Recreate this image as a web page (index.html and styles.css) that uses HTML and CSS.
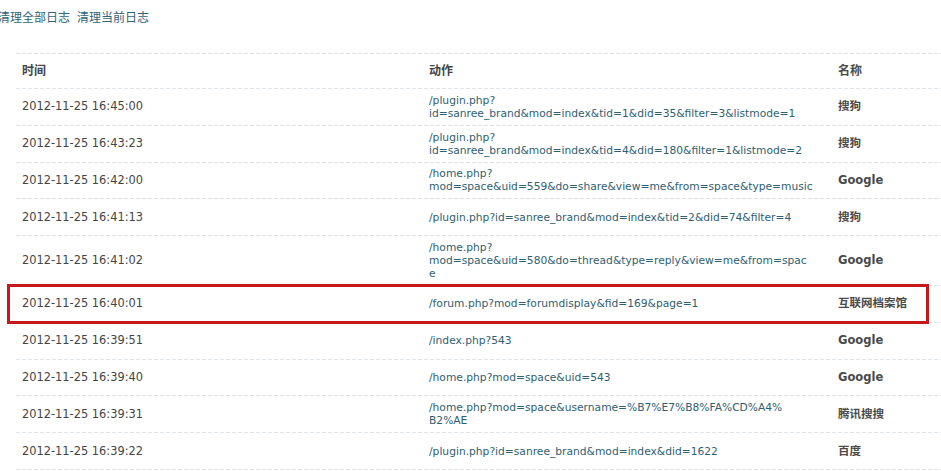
FILE: index.html
```html
<!DOCTYPE html>
<html lang="zh-CN">
<head>
<meta charset="utf-8">
<title>日志</title>
<link rel="stylesheet" href="styles.css">
</head>
<body>
<div class="actions"><a href="#">清理全部日志</a><a href="#">清理当前日志</a></div>
<div class="tb">
  <div class="row head"><div class="c1">时间</div><div class="c2">动作</div><div class="c3">名称</div></div>
  <div class="row"><div class="c1">2012-11-25 16:45:00</div><div class="c2"><a href="#">/plugin.php?<br>id=sanree_brand&amp;mod=index&amp;tid=1&amp;did=35&amp;filter=3&amp;listmode=1</a></div><div class="c3">搜狗</div></div>
  <div class="row"><div class="c1">2012-11-25 16:43:23</div><div class="c2"><a href="#">/plugin.php?<br>id=sanree_brand&amp;mod=index&amp;tid=4&amp;did=180&amp;filter=1&amp;listmode=2</a></div><div class="c3">搜狗</div></div>
  <div class="row"><div class="c1">2012-11-25 16:42:00</div><div class="c2"><a href="#">/home.php?<br>mod=space&amp;uid=559&amp;do=share&amp;view=me&amp;from=space&amp;type=music</a></div><div class="c3">Google</div></div>
  <div class="row"><div class="c1">2012-11-25 16:41:13</div><div class="c2"><a href="#">/plugin.php?id=sanree_brand&amp;mod=index&amp;tid=2&amp;did=74&amp;filter=4</a></div><div class="c3">搜狗</div></div>
  <div class="row"><div class="c1">2012-11-25 16:41:02</div><div class="c2"><a href="#">/home.php?<br>mod=space&amp;uid=580&amp;do=thread&amp;type=reply&amp;view=me&amp;from=spac<br>e</a></div><div class="c3">Google</div></div>
  <div class="row hl"><div class="c1">2012-11-25 16:40:01</div><div class="c2"><a href="#">/forum.php?mod=forumdisplay&amp;fid=169&amp;page=1</a></div><div class="c3">互联网档案馆</div><span class="mark"></span></div>
  <div class="row"><div class="c1">2012-11-25 16:39:51</div><div class="c2"><a href="#">/index.php?543</a></div><div class="c3">Google</div></div>
  <div class="row"><div class="c1">2012-11-25 16:39:40</div><div class="c2"><a href="#">/home.php?mod=space&amp;uid=543</a></div><div class="c3">Google</div></div>
  <div class="row"><div class="c1">2012-11-25 16:39:31</div><div class="c2"><a href="#">/home.php?mod=space&amp;username=%B7%E7%B8%FA%CD%A4%<br>B2%AE</a></div><div class="c3">腾讯搜搜</div></div>
  <div class="row"><div class="c1">2012-11-25 16:39:22</div><div class="c2"><a href="#">/plugin.php?id=sanree_brand&amp;mod=index&amp;did=1622</a></div><div class="c3">百度</div></div>
</div>
</body>
</html>
```
FILE: styles.css
```css
html, body {
  margin: 0;
  padding: 0;
  background: #fff;
  overflow: hidden;
}
body {
  width: 941px;
  font-family: "DejaVu Sans", "Noto Sans CJK SC", sans-serif;
  font-size: 11px;
  color: #444;
}
a {
  color: #2f6072;
  text-decoration: none;
}
.actions {
  padding-top: 9px;
  margin-left: -2px;
  height: 16px;
  line-height: 16px;
  font-size: 12px;
  font-family: "Noto Sans CJK SC", sans-serif;
  display: flex;
  gap: 7px;
}
.actions a {
  color: #2f6477;
}
.tb {
  margin-top: 28px;
  margin-left: 16px;
  width: 925px;
  background: repeating-linear-gradient(to right, #dde3e6 0 4px, transparent 4px 6px) top / 100% 1px no-repeat;
  padding-top: 1px;
}
.row {
  display: grid;
  grid-template-columns: 407px 409px 1fr;
  align-items: center;
  box-sizing: border-box;
  min-height: 36.8px;
  padding: 4.9px 0 5.9px;
  line-height: 13px;
  background: repeating-linear-gradient(to right, #dde3e6 0 4px, transparent 4px 6px) bottom / 100% 1px no-repeat;
  position: relative;
}
.row.head {
  min-height: 35px;
  font-weight: bold;
  font-size: 12px;
  color: #444;
}
.row > div {
  padding: 0 6px;
}
.c1 {
  color: #444;
  font-size: 11.4px;
}
.c2 {
  font-size: 10.7px;
}
.c3 {
  font-weight: bold;
  font-size: 11.5px;
  color: #4a4a4a;
}
.head .c1, .head .c2, .head .c3 {
  font-size: 12px;
}
.mark {
  position: absolute;
  left: -9px;
  top: -1.5px;
  width: 922px;
  height: 40px;
  box-sizing: border-box;
  border: 3px solid #c8161d;
  pointer-events: none;
}
```
